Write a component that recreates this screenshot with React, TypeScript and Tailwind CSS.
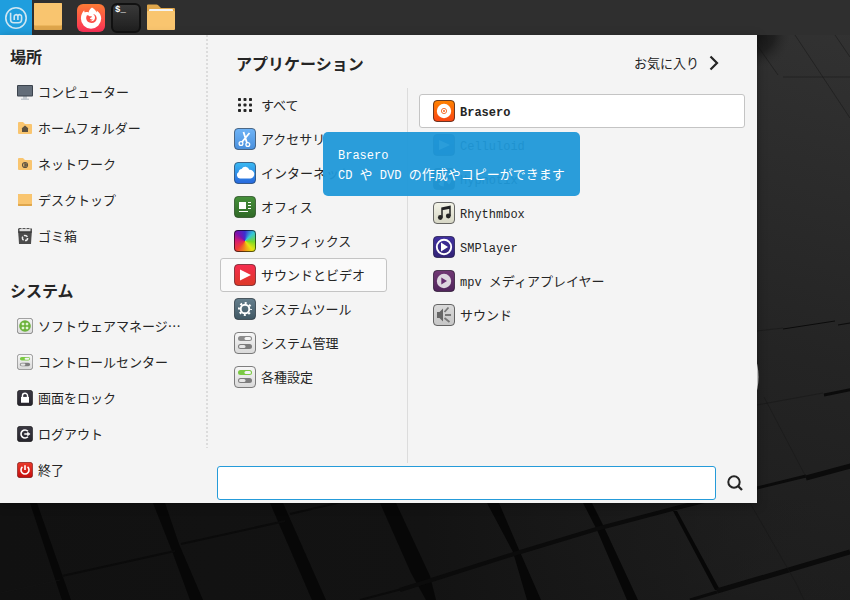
import type { ReactNode } from "react";
import { clsx } from "clsx";

type Entry = { label: ReactNode; icon: ReactNode; active?: boolean };

// ---------- Icons ----------

function Tile({ id, from, to, stroke = "#3a3a3a", size = "size-[22px]", children }: any) {
    return (
        <svg viewBox="0 0 22 22" className={clsx("shrink-0", size)} aria-hidden="true">
            <defs>
                <linearGradient id={id} x1="0" y1="0" x2="0" y2="1">
                    <stop offset="0" stopColor={from} />
                    <stop offset="1" stopColor={to} />
                </linearGradient>
            </defs>
            <rect x="0.5" y="0.5" width="21" height="21" rx="3.5" fill={`url(#${id})`} stroke={stroke} strokeOpacity="0.75" />
            {children}
        </svg>
    );
}

function Switches({ id, top, size }: { id: string; top: string; size?: string }) {
    return (
        <Tile id={id} from="#f7f7f7" to="#d9d9d9" stroke="#555" size={size}>
            <rect x="4" y="4" width="14" height="5" rx="2.5" fill={top} />
            <rect x="10.5" y="5" width="6.5" height="3" rx="1.5" fill="#f4f4f4" />
            <rect x="4" y="12" width="14" height="5" rx="2.5" fill="#7d7d7d" />
            <rect x="5" y="13" width="6.5" height="3" rx="1.5" fill="#e6e6e6" />
        </Tile>
    );
}

function MintLogo() {
    return (
        <svg viewBox="0 0 24 24" className="size-6" fill="none" stroke="#cfe6f2" aria-hidden="true">
            <circle cx="12" cy="12" r="10.2" strokeWidth="1.6" />
            <path d="M6.6 6.8v6.700a3.300 3.300 0 0 0 3.300 3.300h4.400a3.300 3.300 0 0 0 3.300-3.300v-2.700a1.900 1.900 0 0 0-3.700-.8 1.900 1.900 0 0 0-3.700.8v3.200M13.900 10.300V14" strokeWidth="1.600" />
        </svg>
    );
}

function DesktopFolder({ size }: { size: string }) {
    return (
        <svg viewBox="0 0 28 27" preserveAspectRatio="none" className={clsx("shrink-0", size)} aria-hidden="true">
            <rect width="28" height="27" rx="1" fill="#dfa64b" />
            <rect width="28" height="22.5" rx="1" fill="#f9c56f" />
        </svg>
    );
}

function FilesFolder() {
    return (
        <svg viewBox="0 0 28 26" className="h-[26px] w-7" aria-hidden="true">
            <path d="M1 .5h8.5q1 0 1.700.8L14 4h13q1 0 1 1v8H0V1.500q0-1 1-1z" fill="#dfa64b" />
            <rect x="2" y="5" width="24" height="5" rx="1" fill="#f3f3f3" />
            <path d="M0 8q0-1 1-1h26q1 0 1 1v17q0 1-1 1H1q-1 0-1-1z" fill="#f9c56f" />
        </svg>
    );
}

function Firefox() {
    return (
        <svg viewBox="0 0 30 30" className="size-[30px]" aria-hidden="true">
            <defs>
                <linearGradient id="fox" x1="0" y1="0" x2="0" y2="1">
                    <stop offset="0" stopColor="#fd7b35" />
                    <stop offset="1" stopColor="#fb3057" />
                </linearGradient>
            </defs>
            <rect x="1" y="1" width="28" height="28" rx="6" fill="url(#fox)" />
            <path d="M16 4.500c2.700 1.500 4 3.500 4.600 5 .3-.8.2-1.400.1-2 2.900 2 4.500 4.700 4.500 8.100A10.200 10.200 0 0 1 15 25.700 10.200 10.200 0 0 1 4.900 15.500c0-3.300 1.300-6 3.300-8.200 0 1 .2 1.700.6 2.200 1.200-.6 2.600-.6 3.800 0C13 7.500 14 5.500 16 4.500z" fill="#fff" />
            <path d="M10.800 12.400c1.200-.2 2 .1 2.700.9h2.200c.4.500-.3 1.300-1.800 1.800 0 1.100 1.300 1.700 2.900 1.100-.6 1.200-1.800 1.700-3.100 1.500 2.500 1.300 5.400-.3 5.300-3.200 0-1.500-.8-2.700-2-3.500 2.400.5 3.800 2.200 3.700 4.500-.1 2.600-2.200 4.500-5.200 4.500-3 0-5.100-1.900-5.300-4.400-.1-1.300.1-2.400.6-3.200z" fill="#fb5047" />
        </svg>
    );
}

function Terminal() {
    return (
        <span className="flex size-[30px] items-start rounded-md border-2 border-[#111] bg-linear-to-b from-[#393939] to-[#1f1f1f] pl-0.5 font-['Liberation_Mono'] text-[9px] leading-[11px] font-bold text-white">
            $_
        </span>
    );
}

function Computer() {
    return (
        <svg viewBox="0 0 16 16" className="size-4" aria-hidden="true">
            <path d="M6 12h4v2.500h2V16H4v-1.500h2z" fill="#c3c9cf" />
            <rect y="1" width="16" height="11.500" rx="1" fill="#3b434d" />
            <rect x="1" y="2" width="14" height="9.500" fill="#636d79" />
        </svg>
    );
}

function SmallFolder({ children }: { children: ReactNode }) {
    return (
        <svg viewBox="0 0 16 16" className="size-4" aria-hidden="true">
            <path d="M1 3q0-1 1-1h4l2 2h6q1 0 1 1v8q0 1-1 1H2q-1 0-1-1z" fill="#f9c56f" />
            {children}
        </svg>
    );
}

function Trash() {
    return (
        <svg viewBox="0 0 16 16" className="size-4" aria-hidden="true">
            <path d="M1 1h14l-1 15H2z" fill="#4b4b4b" />
            <path d="M2.500 1h11v2.500h-11z" fill="#ddd" />
            <path d="M1 4h14" stroke="#333" strokeWidth="1" />
            <path d="M1.500.5h13" stroke="#555" strokeWidth="1" strokeDasharray="3 1" />
            <circle cx="8" cy="10" r="2.600" fill="none" stroke="#eee" strokeWidth="1.500" strokeDasharray="4 1.400" />
        </svg>
    );
}

const places: Entry[] = [
    { label: "コンピューター", icon: <Computer /> },
    { label: "ホームフォルダー", icon: <SmallFolder><path d="M8 5.500l3.500 3H11V12H5V8.500h-.5z" fill="#5c5140" /></SmallFolder> },
    {
        label: "ネットワーク",
        icon: (
            <SmallFolder>
                <circle cx="8" cy="9" r="2.500" fill="none" stroke="#5c5140" strokeWidth="1.200" />
                <path d="M8 7v4M8 9h2" stroke="#5c5140" strokeWidth="1.400" />
            </SmallFolder>
        ),
    },
    { label: "デスクトップ", icon: <span className="flex size-4 items-center justify-center"><DesktopFolder size="h-3 w-3.5" /></span> },
    { label: "ゴミ箱", icon: <Trash /> },
];

const system: Entry[] = [
    {
        label: "ソフトウェアマネージ…",
        icon: (
            <Tile id="soft" from="#f5f5f5" to="#dcdcdc" stroke="#444" size="size-4">
                <circle cx="11" cy="11" r="8" fill="#6cb33c" />
                <g fill="#e2f4d5">
                    <rect x="6.500" y="6.500" width="3.500" height="3.500" rx="1" />
                    <rect x="12" y="6.500" width="3.500" height="3.500" rx="1" />
                    <rect x="6.500" y="12" width="3.500" height="3.500" rx="1" />
                    <rect x="12" y="12" width="3.500" height="3.500" rx="1" />
                </g>
            </Tile>
        ),
    },
    { label: "コントロールセンター", icon: <Switches id="cc" top="#7ac943" size="size-4" /> },
    {
        label: "画面をロック",
        icon: (
            <Tile id="lock" from="#3a3842" to="#26242c" stroke="#111" size="size-4">
                <rect x="5.500" y="9.500" width="11" height="8" fill="#fff" />
                <path d="M7.500 10V8a3.500 3.500 0 0 1 7 0v2" fill="none" stroke="#fff" strokeWidth="2" />
            </Tile>
        ),
    },
    {
        label: "ログアウト",
        icon: (
            <Tile id="logout" from="#3a3842" to="#26242c" stroke="#111" size="size-4">
                <path d="M15 7.200a5.500 5.500 0 1 0 0 7.600M10 11h8M15 8.500v5" fill="none" stroke="#fff" strokeWidth="2.200" />
            </Tile>
        ),
    },
    {
        label: "終了",
        icon: (
            <Tile id="quit" from="#ea3a2a" to="#c50d0d" stroke="#5a1010" size="size-4">
                <path d="M7.500 6.800a5.500 5.500 0 1 0 7 0M11 4.500V11" fill="none" stroke="#fff" strokeWidth="2.200" />
            </Tile>
        ),
    },
];

const categories: Entry[] = [
    {
        label: "すべて",
        icon: (
            <svg viewBox="0 0 22 22" className="size-[22px]" fill="#252525" aria-hidden="true">
                {[4, 9.500, 15].map((y) => [4, 9.500, 15].map((x) => <rect key={`${x}-${y}`} x={x} y={y} width="3" height="3" rx="0.800" />))}
            </svg>
        ),
    },
    {
        label: "アクセサリ",
        icon: (
            <Tile id="acc" from="#6fb4f7" to="#4a90dd" stroke="#2b4460">
                <path d="M9.500 4l3.500 11M15.500 5L8 14" stroke="#fff" strokeWidth="1.800" />
                <g fill="none" stroke="#fff" strokeWidth="1.300">
                    <circle cx="7" cy="15.500" r="1.900" />
                    <circle cx="13.800" cy="16.500" r="1.900" />
                </g>
            </Tile>
        ),
    },
    {
        label: "インターネット",
        icon: (
            <Tile id="net" from="#39baf2" to="#2867dd" stroke="#1b4068">
                <path d="M6 16.500a3.400 3.400 0 0 1-1.300-6.400A3.200 3.200 0 0 1 7.600 7a4.200 4.200 0 0 1 7.700.8 4.200 4.200 0 0 1 1.200 8.700z" fill="#fff" />
            </Tile>
        ),
    },
    {
        label: "オフィス",
        icon: (
            <Tile id="office" from="#459039" to="#306927" stroke="#254a20">
                <rect x="5" y="6" width="7" height="7" fill="#fff" />
                <path d="M14 6.500h3M14 9.500h3M14 12.500h3M5 15.500h9" stroke="#fff" />
            </Tile>
        ),
    },
    {
        label: "グラフィックス",
        icon: (
            <span className="size-[22px] rounded-sm border border-black/60 bg-[conic-gradient(#3b2fd0,#35c5d8_45deg,#76d827_95deg,#e8e312_140deg,#f08a1a_185deg,#ef3b38_225deg,#d81d6f_270deg,#7b10b0_315deg,#3b2fd0)] bg-origin-border" />
        ),
    },
    {
        label: "サウンドとビデオ",
        active: true,
        icon: (
            <Tile id="media" from="#f62d50" to="#dc3927" stroke="#641c24">
                <path d="M6 5.500v11L17 11z" fill="#fff" />
            </Tile>
        ),
    },
    {
        label: "システムツール",
        icon: (
            <Tile id="tools" from="#657f8d" to="#405763" stroke="#29363e">
                <circle cx="11" cy="11" r="6" fill="none" stroke="#fff" strokeWidth="2" strokeDasharray="2 2.712" strokeDashoffset="1" />
                <circle cx="11" cy="11" r="4.300" fill="none" stroke="#fff" strokeWidth="1.900" />
            </Tile>
        ),
    },
    { label: "システム管理", icon: <Switches id="admin" top="#8b8b8b" /> },
    { label: "各種設定", icon: <Switches id="prefs" top="#7ac943" /> },
];

const apps: Entry[] = [
    {
        label: <Latin>Brasero</Latin>,
        active: true,
        icon: (
            <Tile id="brasero" from="#ff8300" to="#fa4515" stroke="#3a1004">
                <circle cx="11" cy="11" r="7.200" fill="#fff" />
                <circle cx="11" cy="11" r="2.600" fill="none" stroke="#f4631c" strokeWidth="0.900" />
                <circle cx="11" cy="11" r="1" fill="#f4631c" />
            </Tile>
        ),
    },
    {
        label: <Latin>Celluloid</Latin>,
        icon: (
            <Tile id="cell" from="#3467b5" to="#264f91">
                <path d="M6 6v10l11-5z" fill="#fff" />
            </Tile>
        ),
    },
    {
        label: <Latin>Hypnotix</Latin>,
        icon: (
            <Tile id="hyp" from="#4d5a66" to="#39444d">
                <circle cx="11" cy="11" r="5" fill="none" stroke="#fff" strokeWidth="5" strokeDasharray="4 3.850" />
            </Tile>
        ),
    },
    {
        label: <Latin>Rhythmbox</Latin>,
        icon: (
            <Tile id="rhythm" from="#f4f4e8" to="#d6d6c5">
                <path d="M9 15.500V6l8-1.500v9.500M9 7.500l8-1.500" fill="none" stroke="#242424" strokeWidth="1.500" />
                <circle cx="7.300" cy="15.500" r="2.400" fill="#242424" />
                <circle cx="15.300" cy="14" r="2.400" fill="#242424" />
            </Tile>
        ),
    },
    {
        label: <Latin>SMPlayer</Latin>,
        icon: (
            <Tile id="smp" from="#4030a0" to="#322376" stroke="#1e1748">
                <circle cx="11" cy="11" r="7.200" fill="none" stroke="#fff" strokeWidth="1.900" />
                <path d="M8 6.500v9l7-4.500z" fill="#fff" />
            </Tile>
        ),
    },
    {
        label: <><Latin>mpv </Latin>メディアプレイヤー</>,
        icon: (
            <Tile id="mpv" from="#713874" to="#50245b" stroke="#2a1731">
                <circle cx="11" cy="11" r="7.200" fill="#ddd6df" />
                <path d="M8.300 7.500v7l5.700-3.500z" fill="#672d70" />
            </Tile>
        ),
    },
    {
        label: "サウンド",
        icon: (
            <Tile id="sound" from="#dadada" to="#c6c6c6">
                <path d="M4 8h2.500L10 4.500v13L6.500 14H4z" fill="#666" />
                <path d="M11.500 8l4-4.500M12 11h6M11.500 14l5 4" stroke="#777" strokeWidth="1.800" />
            </Tile>
        ),
    },
];

// Latin runs are set a size smaller so they sit evenly beside the kana
function Latin({ children }: { children: ReactNode }) {
    return <span className="font-['Liberation_Mono'] text-xs leading-none whitespace-pre">{children}</span>;
}

function SideSection({ title, items }: { title: string; items: Entry[] }) {
    return (
        <section>
            <h2 className="flex h-9 items-center pl-2.5 text-base font-bold">{title}</h2>
            <ul>
                {items.map((item, i) => (
                    <li key={i}>
                        <button className="flex h-9 w-full items-center gap-[5px] pl-[17px] text-left">
                            {item.icon}
                            <span className="whitespace-nowrap">{item.label}</span>
                        </button>
                    </li>
                ))}
            </ul>
        </section>
    );
}

function MenuRow({ item, activeClass }: { item: Entry; activeClass: string }) {
    return (
        <li>
            <button
                className={clsx(
                    "flex h-[34px] w-full items-center gap-[5px] rounded-[3px] border px-[13px] text-left",
                    item.active ? activeClass : "border-transparent"
                )}
            >
                {item.icon}
                <span className="whitespace-nowrap">{item.label}</span>
            </button>
        </li>
    );
}

function Wallpaper() {
    return (
        <svg viewBox="0 0 850 600" preserveAspectRatio="xMinYMin slice" className="absolute inset-0 size-full" aria-hidden="true">
            <defs>
                <linearGradient id="wall" x1="0.900" y1="0" x2="0.500" y2="1">
                    <stop offset="0" stopColor="#323232" />
                    <stop offset="0.500" stopColor="#242424" />
                    <stop offset="0.850" stopColor="#1d1d1d" />
                    <stop offset="1" stopColor="#161616" />
                </linearGradient>
                <linearGradient id="wallLeft">
                    <stop offset="0" stopColor="#111" />
                    <stop offset="0.500" stopColor="#131313" />
                    <stop offset="0.800" stopColor="#1a1a1a" stopOpacity="0.700" />
                    <stop offset="1" stopColor="#202020" stopOpacity="0" />
                </linearGradient>
                <radialGradient id="corner">
                    <stop offset="0" stopColor="#151515" />
                    <stop offset="0.500" stopColor="#1b1b1b" stopOpacity="0.800" />
                    <stop offset="1" stopColor="#2c2c2c" stopOpacity="0" />
                </radialGradient>
            </defs>
            <rect width="850" height="600" fill="url(#wall)" />
            <rect y="500" width="850" height="100" fill="url(#wallLeft)" />
            <circle cx="757" cy="35" r="34" fill="url(#corner)" />
            <g fill="#070707">
                <path d="M30 503h7l34 97h-9z" />
                <path d="M153 503h12l14 41 24 56h-13l-18-49z" />
                <path d="M270 503h13l43 97h-14z" />
                <path d="M380 503h16l34 73 6 24h-10l-15-27z" />
                <path d="M487 503h12l21 49 21 48h-14l-14-48z" />
                <path d="M583 503h9l12 24 34 73h-11l-30-70z" />
                <path d="M673 511h4l43 79h-5z" />
            </g>
            <g fill="none" stroke="#0b0b0b">
                <path d="M62 576l113-25M181 544l104-23M290 514l60-14M360 600l65-17" strokeWidth="2" />
                <path d="M400 590l117-37 83-25 76-20 81-20" strokeWidth="4" />
                <path d="M757 488l49-12M690 600l27-8M824 395l30-6" strokeWidth="3" />
                <path d="M806 478l48-13M717 591l133-39" strokeWidth="5" />
                <path d="M783 329l52-8M838 325l12-2" strokeWidth="1" />
            </g>
            <g fill="none" stroke="#151515" strokeOpacity="0.500">
                <path d="M0 593l60-13M757 405l66-12M764 397l42 80M750 503l46 80 8 17M757 331l26-3" />
                <path d="M783 77h67M795 35l55 83M835 35l15 22M757 45l21 30" />
            </g>
            <circle cx="696" cy="377" r="62.500" fill="#d8d8d8" />
        </svg>
    );
}

export default function App() {
    return (
        <div lang="ja" className="relative flex min-h-screen flex-col bg-[#1b1b1b] font-['Noto_Sans_CJK_JP',sans-serif] text-[13px] leading-5 text-[#252525]">
            <Wallpaper />

            {/* Panel */}
            <header className="relative flex h-[35px] items-center bg-[#2f2f2f]">
                <button aria-label="メニュー" className="flex h-full w-8 items-center justify-center bg-[#1f9ede]"><MintLogo /></button>
                <button aria-label="デスクトップを表示" className="ml-0.5 pb-0.5"><DesktopFolder size="h-[27px] w-7" /></button>
                <div className="ml-3.5 flex items-center gap-[5px]">
                    <button aria-label="Firefox"><Firefox /></button>
                    <button aria-label="端末"><Terminal /></button>
                    <button aria-label="ファイル" className="pb-0.5 pl-px"><FilesFolder /></button>
                </div>
            </header>

            {/* Menu */}
            <main className="relative flex w-full max-w-[757px] bg-[#f4f4f4] pb-[3px] shadow-[0_2px_10px_rgba(0,0,0,0.3)]">
                <nav className="flex w-[206px] shrink-0 flex-col gap-[18px] pt-[3px] pb-3">
                    <SideSection title="場所" items={places} />
                    <SideSection title="システム" items={system} />
                </nav>
                <div className="mb-[52px] w-0.5 shrink-0 bg-[repeating-linear-gradient(#dcdcdc_0_2px,transparent_2px_4px)]" />

                <div className="flex min-w-0 flex-1 flex-col">
                    <div className="flex h-[53px] items-center justify-between pt-0.5 pr-[38px] pl-7">
                        <h2 className="text-base font-bold">アプリケーション</h2>
                        <button className="flex items-center gap-2.5">
                            お気に入り
                            <svg viewBox="0 0 10 16" className="h-4 w-2.5" fill="none" stroke="#252525" strokeWidth="2.200" aria-hidden="true">
                                <path d="M1.500 1.500L8 8l-6.500 6.500" />
                            </svg>
                        </button>
                    </div>

                    <div className="flex flex-1 pr-3 pl-3">
                        <ul className="w-[167px] shrink-0">
                            {categories.map((item, i) => (
                                <MenuRow key={i} item={item} activeClass="border-[#c4c4c4] bg-[#fafafa]" />
                            ))}
                        </ul>
                        <div className="mr-[11px] ml-5 w-px shrink-0 bg-[#dcdcdc]" />
                        <ul className="flex-1 pt-1.5">
                            {apps.map((item, i) => (
                                <MenuRow key={i} item={item} activeClass="border-[#c4c4c4] bg-white font-bold" />
                            ))}
                        </ul>
                    </div>

                    <form className="mt-[3px] flex items-center gap-[11px] pr-3.5 pl-[9px]">
                        <input type="text" aria-label="検索" className="h-[34px] min-w-0 flex-1 rounded-[3px] border border-[#259bd9] bg-white px-2 outline-none" />
                        <button type="button" aria-label="検索する">
                            <svg viewBox="0 0 16 16" className="size-4" fill="none" stroke="#252525" strokeWidth="2" aria-hidden="true">
                                <circle cx="7" cy="7" r="5.700" />
                                <path d="M11 11l4 4" strokeWidth="2.300" />
                            </svg>
                        </button>
                    </form>
                </div>

                <div role="tooltip" className="absolute top-[97px] left-[323px] rounded-[5px] bg-[#1f98d8]/95 px-[15px] py-3 whitespace-nowrap text-white">
                    <p><Latin>Brasero</Latin></p>
                    <p><Latin>CD </Latin>や<Latin> DVD </Latin>の作成やコピーができます</p>
                </div>
            </main>
        </div>
    );
}
